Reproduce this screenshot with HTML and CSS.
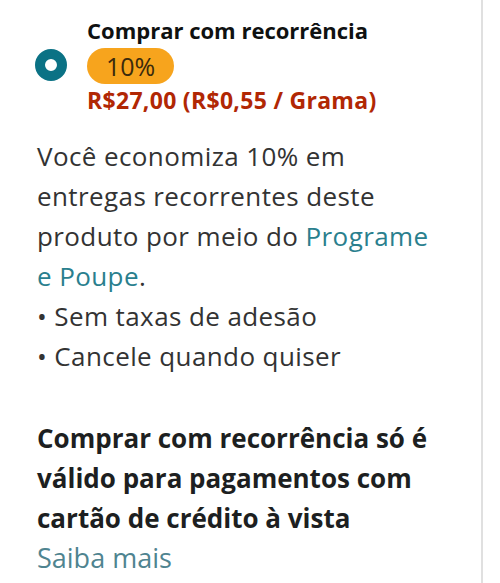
FILE: index.html
```html
<!DOCTYPE html>
<html lang="pt-BR">
<head>
<meta charset="utf-8">
<link rel="stylesheet" href="styles.css">
</head>
<body>
<div class="panel">
  <div class="option">
    <span class="radio"></span>
    <div class="option-text">
      <div class="title">Comprar com recorrência</div>
      <span class="badge">10%</span>
      <div class="price">R$27,00 (R$0,55 / Grama)</div>
    </div>
  </div>
  <p class="desc">Você economiza 10% em<br>entregas recorrentes deste<br>produto por meio do <a class="link">Programe<br>e Poupe</a>.<br>• Sem taxas de adesão<br>• Cancele quando quiser</p>
  <p class="note"><strong class="note-strong">Comprar com recorrência só é<br>válido para pagamentos com<br>cartão de crédito à vista</strong><br><a class="more">Saiba mais</a></p>
</div>
</body>
</html>
```
FILE: styles.css
```css
html, body {
  margin: 0;
  padding: 0;
  background: #ffffff;
}
.panel {
  width: 483px;
  height: 583px;
  box-sizing: border-box;
  border-right: 2px solid #e0e0e0;
  padding: 16px 0 0 35px;
  font-family: "Open Sans", "Liberation Sans", sans-serif;
  color: #333333;
}
.option {
  display: flex;
  align-items: center;
  gap: 20px;
}
.radio {
  flex: none;
  width: 32px;
  height: 32px;
  box-sizing: border-box;
  border-radius: 50%;
  border: 10px solid #0b7285;
  background: #ffffff;
}
.option-text {
  display: flex;
  flex-direction: column;
  align-items: flex-start;
}
.title {
  font-size: 22px;
  line-height: 28px;
  font-weight: 700;
  color: #0f1111;
}
.badge {
  margin-top: 4px;
  height: 36px;
  line-height: 36px;
  padding: 0 19px;
  border-radius: 18px;
  background: #f7a41d;
  color: #3b2a0c;
  font-size: 25px;
}
.price {
  margin-top: 2px;
  font-size: 23px;
  line-height: 28px;
  font-weight: 700;
  letter-spacing: 0.3px;
  color: #b12704;
}
.desc {
  margin: 22px 0 0 2px;
  font-size: 26px;
  line-height: 40px;
  letter-spacing: 0.4px;
}
.link {
  color: #2a7f8e;
}
.note {
  margin: 42px 0 0 2px;
  font-size: 26px;
  line-height: 40px;
}
.note-strong {
  font-weight: 700;
  color: #1d1f21;
}
.more {
  font-size: 27px;
  color: #4f8490;
}
```
